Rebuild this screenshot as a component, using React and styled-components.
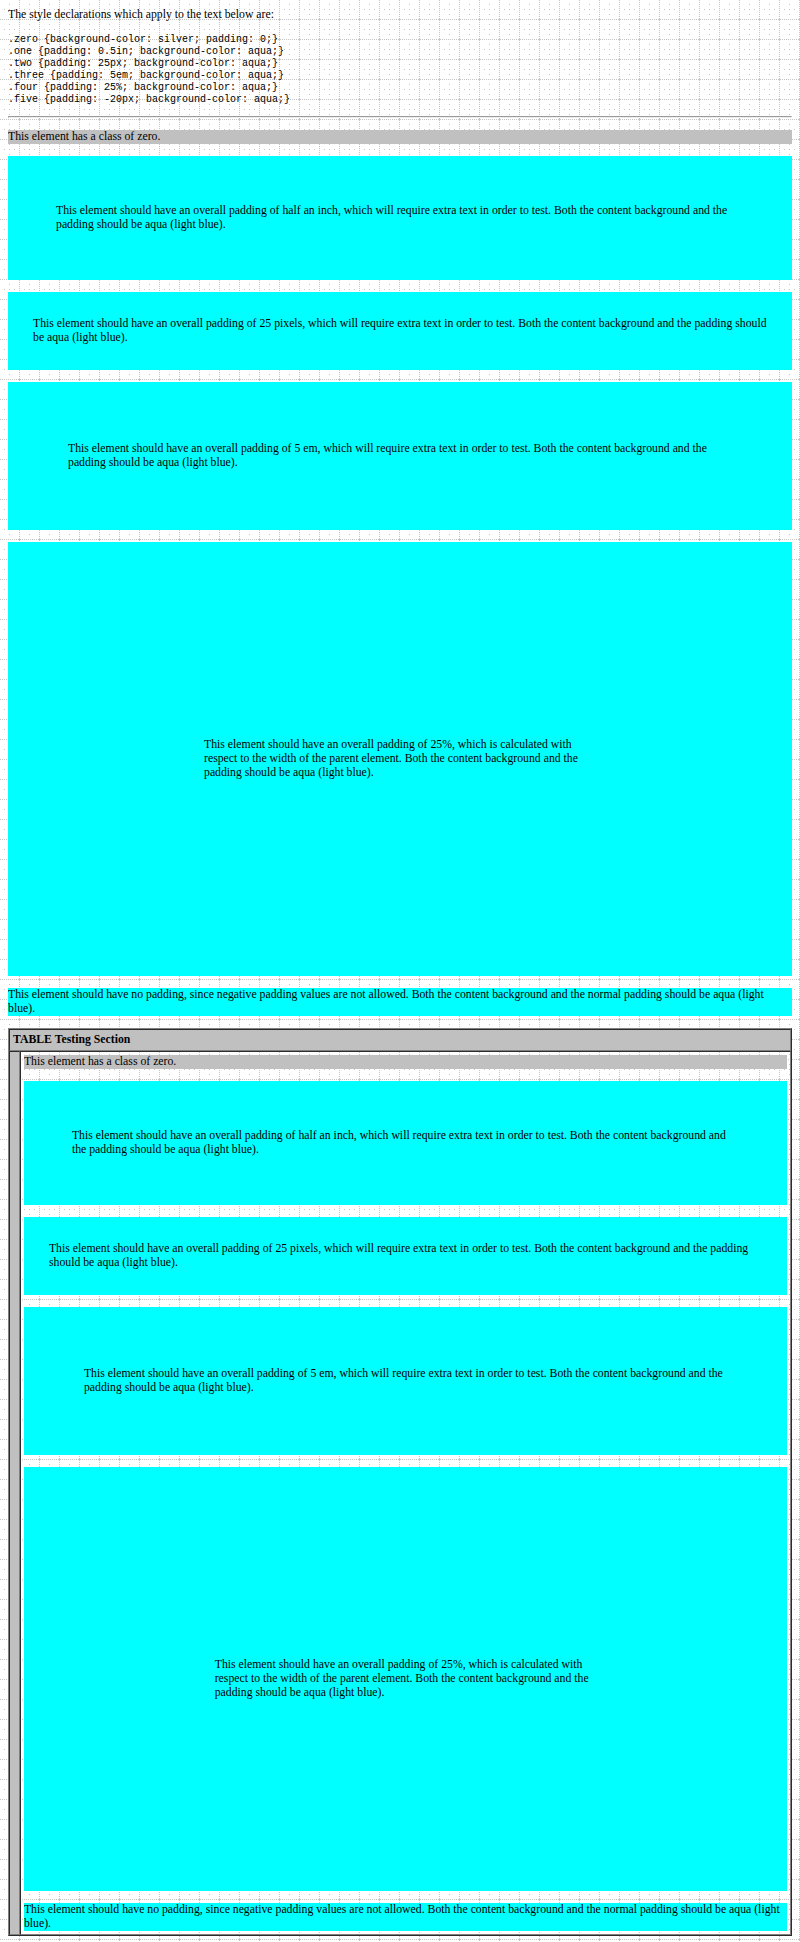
import styled, { createGlobalStyle, css } from 'styled-components';

// grid tile drawn as vector, 20x20, dotted lines on the last row/column and a dotted cross in the middle
const dots = [];
for (let i = 0; i < 20; i += 2) {
  dots.push(`<rect x='${i}' y='19' width='1' height='1'/>`);
  dots.push(`<rect x='19' y='${i}' width='1' height='1'/>`);
}
[[4, 9], [9, 9], [14, 9], [9, 4], [9, 14], [19, 19]].forEach(([x, y]) => {
  dots.push(`<rect x='${x}' y='${y}' width='1' height='1'/>`);
});
const tile = `<svg xmlns='http://www.w3.org/2000/svg' width='20' height='20'><g fill='#c4c4c4'>${dots.join('')}</g></svg>`;
const gridUrl = `url("data:image/svg+xml,${encodeURIComponent(tile)}")`;

const GlobalStyle = createGlobalStyle`
  html {
    background: #fff ${gridUrl} repeat 0 0;
  }
  body {
    margin: 8px;
    background: transparent;
    color: #000;
    font-family: "Liberation Serif", "Times New Roman", serif;
    font-size: 11.76px;
    line-height: 14px;
  }
`;

const Intro = styled.p`
  margin: 0 0 12px;
`;

const Declarations = styled.pre`
  margin: 10px 0;
  font-family: "Liberation Mono", "Courier New", monospace;
  font-size: 10px;
  line-height: 12px;
`;

const Rule = styled.hr`
  margin: 6px 0;
  border: 1px inset;
  color: gray;
`;

const pads = {
  zero: css`background-color: silver; padding: 0;`,
  one: css`padding: 48px; background-color: aqua;`,
  two: css`padding: 25px; background-color: aqua;`,
  three: css`padding: 60px; background-color: aqua;`,
  four: css`padding: 25%; background-color: aqua;`,
  five: css`padding: 0; background-color: aqua;`,
};

const Box = styled.p`
  margin: 12px 0;
  ${({ $kind }) => pads[$kind]}
`;

const TestTable = styled.table`
  width: 100%;
  border: 1px outset gray;
  border-spacing: 0;
  font-size: 11.76px;
  line-height: 14px;
`;

const Cell = styled.td`
  border: 1px inset gray;
  padding: 3px;
  background: ${({ $silver }) => ($silver ? 'silver' : 'transparent')};
  text-align: left;
  vertical-align: middle;

  & > p:first-child {
    margin-top: 0;
  }
  & > p:last-child {
    margin-bottom: 0;
  }
`;

const texts = {
  zero: 'This element has a class of zero.',
  one: 'This element should have an overall padding of half an inch, which will require extra text in order to test. Both the content background and the padding should be aqua (light blue).',
  two: 'This element should have an overall padding of 25 pixels, which will require extra text in order to test. Both the content background and the padding should be aqua (light blue).',
  three: 'This element should have an overall padding of 5 em, which will require extra text in order to test. Both the content background and the padding should be aqua (light blue).',
  four: 'This element should have an overall padding of 25%, which is calculated with respect to the width of the parent element. Both the content background and the padding should be aqua (light blue).',
  five: 'This element should have no padding, since negative padding values are not allowed. Both the content background and the normal padding should be aqua (light blue).',
};

const order = ['zero', 'one', 'two', 'three', 'four', 'five'];

function Boxes() {
  return order.map(k => (
    <Box key={k} $kind={k}>{texts[k]}</Box>
  ));
}

export default function App() {
  return (
    <>
      <GlobalStyle />
      <Intro>The style declarations which apply to the text below are:</Intro>
      <Declarations>{`.zero {background-color: silver; padding: 0;}
.one {padding: 0.5in; background-color: aqua;}
.two {padding: 25px; background-color: aqua;}
.three {padding: 5em; background-color: aqua;}
.four {padding: 25%; background-color: aqua;}
.five {padding: -20px; background-color: aqua;}`}</Declarations>
      <Rule />
      <Boxes />
      <TestTable>
        <tbody>
          <tr>
            <Cell colSpan={2} $silver>
              <strong>TABLE Testing Section</strong>
            </Cell>
          </tr>
          <tr>
            <Cell $silver>&nbsp;</Cell>
            <Cell>
              <Boxes />
            </Cell>
          </tr>
        </tbody>
      </TestTable>
    </>
  );
}
